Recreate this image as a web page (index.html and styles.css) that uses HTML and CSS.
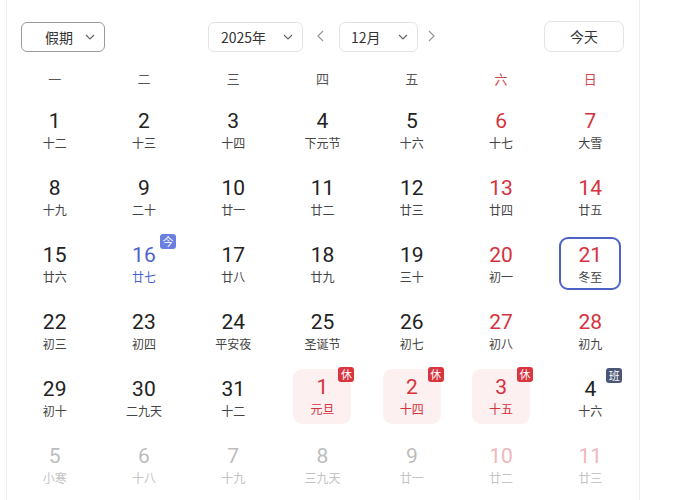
FILE: index.html
```html
<!DOCTYPE html>
<html lang="zh-CN">
<head>
<meta charset="utf-8">
<title>日历</title>
<link rel="stylesheet" href="styles.css">
</head>
<body>
<div class="panel">
  <div class="toolbar">
    <div class="select select-dark"><span>假期</span><svg class="chev" width="10" height="6" viewBox="0 0 10 6"><polyline points="1,1 5,5 9,1" fill="none" stroke="#666" stroke-width="1.2"/></svg></div>
    <div class="center-group">
      <div class="select select-year"><span>2025年</span><svg class="chev" width="10" height="6" viewBox="0 0 10 6"><polyline points="1,1 5,5 9,1" fill="none" stroke="#666" stroke-width="1.2"/></svg></div>
      <span class="arrow arrow-prev"><svg width="8" height="12" viewBox="0 0 8 12"><polyline points="7,1 2,6 7,11" fill="none" stroke="#999" stroke-width="1.2"/></svg></span>
      <div class="select select-month"><span>12月</span><svg class="chev" width="10" height="6" viewBox="0 0 10 6"><polyline points="1,1 5,5 9,1" fill="none" stroke="#666" stroke-width="1.2"/></svg></div>
      <span class="arrow arrow-next"><svg width="8" height="12" viewBox="0 0 8 12"><polyline points="1,1 6,6 1,11" fill="none" stroke="#999" stroke-width="1.2"/></svg></span>
    </div>
    <button class="today-btn">今天</button>
  </div>

  <div class="weekdays">
    <span>一</span><span>二</span><span>三</span><span>四</span><span>五</span><span class="we">六</span><span class="we">日</span>
  </div>

  <div class="grid">
    <div class="cell"><div class="day"><span class="num">1</span><span class="lunar">十二</span></div></div>
    <div class="cell"><div class="day"><span class="num">2</span><span class="lunar">十三</span></div></div>
    <div class="cell"><div class="day"><span class="num">3</span><span class="lunar">十四</span></div></div>
    <div class="cell"><div class="day"><span class="num">4</span><span class="lunar">下元节</span></div></div>
    <div class="cell"><div class="day"><span class="num">5</span><span class="lunar">十六</span></div></div>
    <div class="cell"><div class="day weekend"><span class="num">6</span><span class="lunar">十七</span></div></div>
    <div class="cell"><div class="day weekend"><span class="num">7</span><span class="lunar">大雪</span></div></div>

    <div class="cell"><div class="day"><span class="num">8</span><span class="lunar">十九</span></div></div>
    <div class="cell"><div class="day"><span class="num">9</span><span class="lunar">二十</span></div></div>
    <div class="cell"><div class="day"><span class="num">10</span><span class="lunar">廿一</span></div></div>
    <div class="cell"><div class="day"><span class="num">11</span><span class="lunar">廿二</span></div></div>
    <div class="cell"><div class="day"><span class="num">12</span><span class="lunar">廿三</span></div></div>
    <div class="cell"><div class="day weekend"><span class="num">13</span><span class="lunar">廿四</span></div></div>
    <div class="cell"><div class="day weekend"><span class="num">14</span><span class="lunar">廿五</span></div></div>

    <div class="cell"><div class="day"><span class="num">15</span><span class="lunar">廿六</span></div></div>
    <div class="cell"><div class="day today"><span class="num">16</span><span class="lunar">廿七</span><span class="badge badge-today">今</span></div></div>
    <div class="cell"><div class="day"><span class="num">17</span><span class="lunar">廿八</span></div></div>
    <div class="cell"><div class="day"><span class="num">18</span><span class="lunar">廿九</span></div></div>
    <div class="cell"><div class="day"><span class="num">19</span><span class="lunar">三十</span></div></div>
    <div class="cell"><div class="day weekend"><span class="num">20</span><span class="lunar">初一</span></div></div>
    <div class="cell"><div class="day weekend selected"><span class="num">21</span><span class="lunar">冬至</span></div></div>

    <div class="cell"><div class="day"><span class="num">22</span><span class="lunar">初三</span></div></div>
    <div class="cell"><div class="day"><span class="num">23</span><span class="lunar">初四</span></div></div>
    <div class="cell"><div class="day"><span class="num">24</span><span class="lunar">平安夜</span></div></div>
    <div class="cell"><div class="day"><span class="num">25</span><span class="lunar">圣诞节</span></div></div>
    <div class="cell"><div class="day"><span class="num">26</span><span class="lunar">初七</span></div></div>
    <div class="cell"><div class="day weekend"><span class="num">27</span><span class="lunar">初八</span></div></div>
    <div class="cell"><div class="day weekend"><span class="num">28</span><span class="lunar">初九</span></div></div>

    <div class="cell"><div class="day"><span class="num">29</span><span class="lunar">初十</span></div></div>
    <div class="cell"><div class="day"><span class="num">30</span><span class="lunar">二九天</span></div></div>
    <div class="cell"><div class="day"><span class="num">31</span><span class="lunar">十二</span></div></div>
    <div class="cell"><div class="day holiday"><span class="num">1</span><span class="lunar">元旦</span><span class="badge badge-rest">休</span></div></div>
    <div class="cell"><div class="day holiday"><span class="num">2</span><span class="lunar">十四</span><span class="badge badge-rest">休</span></div></div>
    <div class="cell"><div class="day holiday"><span class="num">3</span><span class="lunar">十五</span><span class="badge badge-rest">休</span></div></div>
    <div class="cell"><div class="day"><span class="num">4</span><span class="lunar">十六</span><span class="badge badge-work">班</span></div></div>

    <div class="cell"><div class="day other"><span class="num">5</span><span class="lunar">小寒</span></div></div>
    <div class="cell"><div class="day other"><span class="num">6</span><span class="lunar">十八</span></div></div>
    <div class="cell"><div class="day other"><span class="num">7</span><span class="lunar">十九</span></div></div>
    <div class="cell"><div class="day other"><span class="num">8</span><span class="lunar">三九天</span></div></div>
    <div class="cell"><div class="day other"><span class="num">9</span><span class="lunar">廿一</span></div></div>
    <div class="cell"><div class="day other weekend"><span class="num">10</span><span class="lunar">廿二</span></div></div>
    <div class="cell"><div class="day other weekend"><span class="num">11</span><span class="lunar">廿三</span></div></div>
  </div>
</div>
</body>
</html>
```

FILE: styles.css
```css
* { box-sizing: border-box; }

html, body {
  margin: 0;
  padding: 0;
  background: #ffffff;
}

body {
  font-family: "Noto Sans", "Noto Sans CJK SC", sans-serif;
  color: #222;
}

.panel {
  margin-left: 6px;
  width: 634px;
  height: 500px;
  border-left: 1px solid #ededed;
  border-right: 1px solid #ededed;
}

.toolbar {
  display: flex;
  align-items: center;
  padding: 21px 15px 0 14px;
  height: 51px;
}

.select {
  display: flex;
  align-items: center;
  justify-content: space-between;
  height: 30px;
  border: 1px solid #e3e3e3;
  border-radius: 6px;
  font-family: "Noto Sans CJK SC", sans-serif;
  font-size: 14px;
  color: #333;
  padding-right: 9px;
  margin-top: 1px;
}

.select-dark {
  width: 84px;
  padding-left: 23px;
  border-color: #9a9a9a;
}

.select-year {
  width: 95px;
  padding-left: 12px;
}

.select-month {
  width: 79px;
  padding-left: 11px;
}

.select span { line-height: 28px; }

.chev { display: block; }

.center-group {
  display: flex;
  align-items: center;
  margin-left: 103px;
}

.arrow {
  display: flex;
  align-items: center;
  justify-content: center;
  height: 30px;
}

.arrow-prev { width: 36px; padding-right: 2px; }
.arrow-next { width: 28px; }

.today-btn {
  margin-left: auto;
  width: 80px;
  height: 31px;
  background: #fff;
  border: 1px solid #e3e3e3;
  border-radius: 7px;
  font-family: "Noto Sans CJK SC", sans-serif;
  font-size: 14px;
  color: #333;
  padding: 0;
}

.weekdays {
  display: grid;
  grid-template-columns: repeat(7, 1fr);
  margin-top: 9px;
  padding: 0 4px 0 3px;
  height: 36px;
  align-items: center;
  font-family: "Noto Sans CJK SC", sans-serif;
  font-size: 13px;
  color: #555;
  text-align: center;
}

.weekdays .we { color: #cf4650; }

.grid {
  display: grid;
  grid-template-columns: repeat(7, 1fr);
  grid-auto-rows: 67px;
  padding: 0 4px 0 3px;
}

.cell {
  display: flex;
  align-items: center;
  justify-content: center;
}

.day {
  position: relative;
  width: 58px;
  height: 56px;
  border-radius: 9px;
  display: flex;
  flex-direction: column;
  align-items: center;
  justify-content: center;
}

.num {
  font-family: Roboto, "Noto Sans", sans-serif;
  font-size: 21px;
  line-height: 25px;
  color: #222;
}

.lunar {
  font-family: "Noto Sans CJK SC", sans-serif;
  font-size: 12px;
  line-height: 17px;
  color: #444;
}

.weekend .num { color: #d6323d; }

.today .num, .today .lunar { color: #4c63cc; }

.selected {
  width: 62px;
  height: 53px;
  border: 2px solid #4d62c6;
}

.holiday {
  background: #fdf0f0;
  height: 55px;
  margin-top: -3px;
}

.holiday .num, .holiday .lunar { color: #d6323d; }

.other .num { color: #bdbdbd; }
.other .lunar { color: #c4c4c4; }
.other.weekend .num { color: #f1b7bb; }
.other.weekend .lunar { color: #c4c4c4; }

.badge {
  position: absolute;
  top: -2px;
  right: -3px;
  width: 16px;
  height: 15px;
  border-radius: 3px;
  font-family: "Noto Sans CJK SC", sans-serif;
  font-size: 11px;
  line-height: 15px;
  text-align: center;
  color: #fff;
}

.badge-rest { background: #d8353f; }
.badge-today { background: #6a80e0; }
.badge-work { background: #4b5576; }
```
